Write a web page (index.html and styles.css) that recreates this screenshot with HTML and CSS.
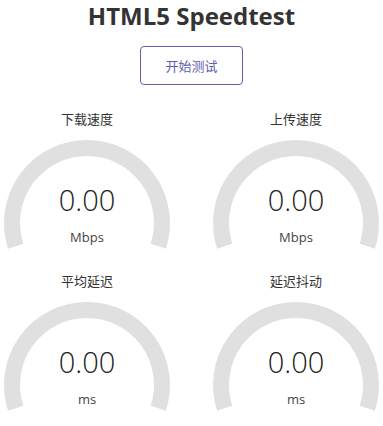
FILE: index.html
```html
<!DOCTYPE html>
<html lang="zh-CN">
<head>
  <meta charset="UTF-8">
  <meta name="viewport" content="width=device-width, initial-scale=1.0">
  <title>HTML5 Speedtest</title>
  <link rel="stylesheet" href="styles.css">
</head>
<body>
  <h1 class="title">HTML5 Speedtest</h1>
  <button class="start-btn" id="start-btn">开始测试</button>

  <div class="test-wrap">
    <div class="test-area">
      <svg class="meter" viewBox="0 0 174 162"><path d="M15.67 137.18 A75 75 0 1 1 158.33 137.18"/></svg>
      <div class="test-name">下载速度</div>
      <div class="meter-text" id="dl-text">0.00</div>
      <div class="unit">Mbps</div>
    </div>
    <div class="test-area">
      <svg class="meter" viewBox="0 0 174 162"><path d="M15.67 137.18 A75 75 0 1 1 158.33 137.18"/></svg>
      <div class="test-name">上传速度</div>
      <div class="meter-text" id="ul-text">0.00</div>
      <div class="unit">Mbps</div>
    </div>
    <div class="test-area">
      <svg class="meter" viewBox="0 0 174 162"><path d="M15.67 137.18 A75 75 0 1 1 158.33 137.18"/></svg>
      <div class="test-name">平均延迟</div>
      <div class="meter-text" id="ping-text">0.00</div>
      <div class="unit">ms</div>
    </div>
    <div class="test-area">
      <svg class="meter" viewBox="0 0 174 162"><path d="M15.67 137.18 A75 75 0 1 1 158.33 137.18"/></svg>
      <div class="test-name">延迟抖动</div>
      <div class="meter-text" id="jitter-text">0.00</div>
      <div class="unit">ms</div>
    </div>
  </div>
</body>
</html>
```

FILE: styles.css
```css
body {
  margin: 0;
  padding: 0;
  background-color: #ffffff;
  color: #333333;
  font-family: 'Open Sans', 'Noto Sans CJK SC', sans-serif;
  text-align: center;
}

.title {
  margin: 0;
  padding-top: 1px;
  font-size: 24px;
  line-height: 30px;
  font-weight: 700;
  color: #333333;
}

.start-btn {
  display: block;
  margin: 15px auto 0;
  width: 103px;
  height: 39px;
  background-color: #ffffff;
  border: 1px solid #6060aa;
  border-radius: 4px;
  color: #6060aa;
  font-family: 'Noto Sans CJK SC', sans-serif;
  font-size: 13px;
  cursor: pointer;
}

.test-wrap {
  display: grid;
  grid-template-columns: 174px 174px;
  justify-content: space-between;
  margin-top: 24px;
}

.test-area {
  position: relative;
  height: 162px;
}

.meter {
  position: absolute;
  top: 0;
  left: 0;
  width: 174px;
  height: 162px;
}

.meter path {
  fill: none;
  stroke: #e0e0e0;
  stroke-width: 16;
}

.test-name {
  position: relative;
  font-family: 'Noto Sans CJK SC', sans-serif;
  font-size: 13px;
  line-height: 20px;
  color: #333333;
}

.meter-text {
  position: relative;
  margin-top: 53px;
  font-size: 29px;
  font-weight: 300;
  line-height: 36px;
  color: #222222;
}

.unit {
  position: relative;
  margin-top: 10px;
  font-size: 13px;
  line-height: 18px;
  color: #444444;
}
```
